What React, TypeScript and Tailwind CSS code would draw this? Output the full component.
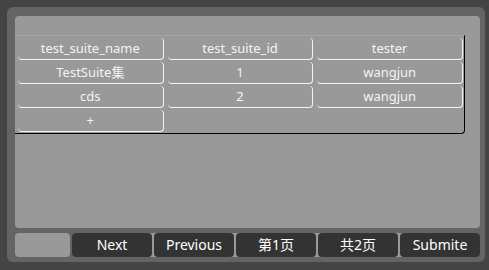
const rows = [
  ['test_suite_name', 'test_suite_id', 'tester'],
  ['TestSuite集', '1', 'wangjun'],
  ['cds', '2', 'wangjun'],
]

const buttons = ['Next', 'Previous', '第1页', '共2页', 'Submite']

function Cell({ text }: { text: string }) {
  return (
    <div className="h-[22px] flex items-center justify-center rounded-[4px] border-r border-b border-[#f4f4f4] text-[13px] text-[#f4f4f4] leading-none">
      {text}
    </div>
  )
}

export default function App() {
  return (
    <div
      className="w-[489px] h-[270px] bg-[#444444] pl-[7px] pt-[7px] pr-[4px] pb-[8px]"
      style={{ fontFamily: '"Noto Sans", "Noto Sans CJK SC", sans-serif' }}
    >
      <div className="w-full h-full bg-[#646464] rounded-[6px] pl-[8px] pt-[9px] pr-[5px] pb-[5px] flex flex-col">
        <div className="flex-1 bg-[#999999] rounded-[4px] pt-[19px]">
          <div className="w-[450px] border-t border-t-[#a6a6a6] border-r border-b border-r-black border-b-black rounded-br-[4px] pl-[3px] pr-[1px] pt-[2px] pb-[1px]">
            <div className="grid grid-cols-3 gap-x-[4px] gap-y-[2px]">
              {rows.map((r, i) => r.map((c, j) => <Cell key={i + '-' + j} text={c} />))}
              <Cell text="+" />
            </div>
          </div>
        </div>
        <div className="mt-[5px] h-[24px] flex gap-[2px]">
          <div className="w-[55px] bg-[#999999] rounded-[4px]" />
          <div className="flex-1 flex justify-end gap-[2px] bg-[#999999] rounded-[4px]">
            {buttons.map((b) => (
              <button
                key={b}
                className="w-[80px] h-full bg-[#333333] rounded-[4px] text-[14px] text-white leading-none flex items-center justify-center"
              >
                {b}
              </button>
            ))}
          </div>
        </div>
      </div>
    </div>
  )
}
